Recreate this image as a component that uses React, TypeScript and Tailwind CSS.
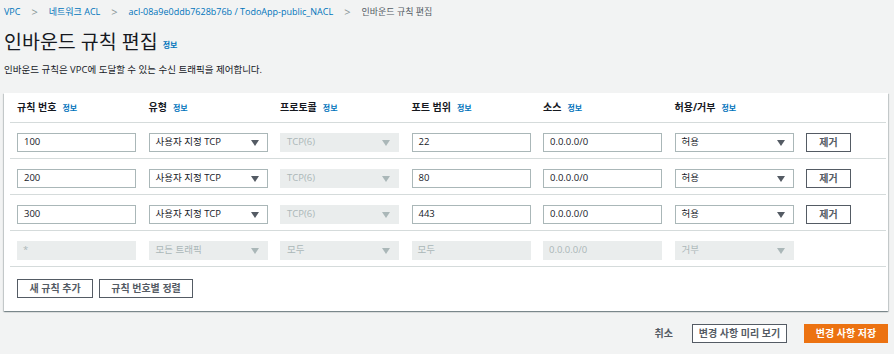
import React from "react";

const font = { fontFamily: '"Open Sans", "Noto Sans CJK KR", sans-serif' };

type Rule = {
  num: string;
  type: string;
  proto: string;
  port: string;
  source: string;
  action: string;
  locked?: boolean;
};

const rules: Rule[] = [
  { num: "100", type: "사용자 지정 TCP", proto: "TCP(6)", port: "22", source: "0.0.0.0/0", action: "허용" },
  { num: "200", type: "사용자 지정 TCP", proto: "TCP(6)", port: "80", source: "0.0.0.0/0", action: "허용" },
  { num: "300", type: "사용자 지정 TCP", proto: "TCP(6)", port: "443", source: "0.0.0.0/0", action: "허용" },
  { num: "*", type: "모든 트래픽", proto: "모두", port: "모두", source: "0.0.0.0/0", action: "거부", locked: true },
];

function Caret({ disabled }: { disabled?: boolean }) {
  return (
    <svg width="8" height="6" viewBox="0 0 8 6" className="shrink-0">
      <path d="M0 0h8L4 6z" fill={disabled ? "#aab7b8" : "#545b64"} />
    </svg>
  );
}

function Field({ value, disabled }: { value: string; disabled?: boolean }) {
  return (
    <div
      className={
        disabled
          ? "h-[19px] bg-[#eaeded] px-[6px] flex items-center text-[9.5px] text-[#aab7b8]"
          : "h-[19px] bg-white border border-[#aab7b8] px-[6px] flex items-center text-[9.5px] text-[#16191f]"
      }
    >
      {value}
    </div>
  );
}

function Select({ value, disabled }: { value: string; disabled?: boolean }) {
  return (
    <div
      className={
        disabled
          ? "h-[19px] bg-[#eaeded] pl-[7px] pr-[9px] flex items-center justify-between text-[9.5px] text-[#aab7b8]"
          : "h-[19px] bg-white border border-[#aab7b8] pl-[6px] pr-[8px] flex items-center justify-between text-[9.5px] text-[#16191f]"
      }
    >
      <span>{value}</span>
      <Caret disabled={disabled} />
    </div>
  );
}

function Label({ text }: { text: string }) {
  return (
    <div className="flex items-center gap-[6px] text-[10px] font-bold text-[#16191f]">
      <span>{text}</span>
      <span className="text-[8px] text-[#0073bb]">정보</span>
    </div>
  );
}

const grid = "grid grid-cols-[repeat(6,119px)_45px] gap-x-[12.5px] items-center";

export default function App() {
  return (
    <main className="min-h-screen bg-[#f2f3f3] px-[4px] pt-[5px]" style={font}>
      {/* Breadcrumb */}
      <nav className="flex items-center gap-[11px] text-[9px] h-[14px]">
        <span className="text-[#0073bb]">VPC</span>
        <span className="text-[#879596] text-[11px]">&gt;</span>
        <span className="text-[#0073bb]">네트워크 ACL</span>
        <span className="text-[#879596] text-[11px]">&gt;</span>
        <span className="text-[#0073bb]">acl-08a9e0ddb7628b76b / TodoApp-public_NACL</span>
        <span className="text-[#879596] text-[11px]">&gt;</span>
        <span className="text-[#545b64]">인바운드 규칙 편집</span>
      </nav>

      {/* Title */}
      <div className="flex items-end gap-[5px] mt-[11px] h-[24px]">
        <h1 className="text-[19.5px] leading-[24px] text-[#16191f]">인바운드 규칙 편집</h1>
        <span className="text-[8px] font-bold text-[#0073bb] mb-[3px]">정보</span>
      </div>
      <p className="text-[9.5px] text-[#16191f] mt-[9px] leading-[14px]">
        인바운드 규칙은 VPC에 도달할 수 있는 수신 트래픽을 제어합니다.
      </p>

      {/* Card */}
      <section className="mt-[16px] w-[884px] bg-white pl-[6px] pr-[2px] shadow-[0_1px_1px_0_rgba(0,28,36,0.3),1px_1px_1px_0_rgba(0,28,36,0.15),-1px_1px_1px_0_rgba(0,28,36,0.15)]">
        <div className={`${grid} h-[30px] pl-[7px] border-b border-[#d5dbdb]`}>
          <Label text="규칙 번호" />
          <Label text="유형" />
          <Label text="프로토콜" />
          <Label text="포트 범위" />
          <Label text="소스" />
          <Label text="허용/거부" />
          <div />
        </div>

        {rules.map((r) => (
          <div key={r.num} className={`${grid} pl-[7px] pt-[10px] pb-[6px] border-b border-[#d5dbdb]`}>
            <Field value={r.num} disabled={r.locked} />
            <Select value={r.type} disabled={r.locked} />
            <Select value={r.proto} disabled />
            <Field value={r.port} disabled={r.locked} />
            <Field value={r.source} disabled={r.locked} />
            <Select value={r.action} disabled={r.locked} />
            {r.locked ? (
              <div />
            ) : (
              <button className="h-[19px] border border-[#545b64] text-[10px] font-semibold text-[#545b64] bg-white">
                제거
              </button>
            )}
          </div>
        ))}

        <div className="flex gap-[6px] pl-[7px] pt-[12px] pb-[13px]">
          <button className="h-[19px] w-[76px] border border-[#545b64] text-[10px] font-semibold text-[#545b64] bg-white">
            새 규칙 추가
          </button>
          <button className="h-[19px] w-[94px] border border-[#545b64] text-[10px] font-semibold text-[#545b64] bg-white">
            규칙 번호별 정렬
          </button>
        </div>
      </section>

      {/* Footer actions */}
      <div className="flex items-center justify-end w-[884px] mt-[13px]">
        <button className="text-[10px] font-semibold text-[#545b64] mr-[19px]">취소</button>
        <button className="h-[19px] w-[95px] border border-[#545b64] text-[10px] font-semibold text-[#545b64] bg-white mr-[17px]">
          변경 사항 미리 보기
        </button>
        <button className="h-[19px] w-[84px] bg-[#ec7211] text-[10px] font-bold text-white">
          변경 사항 저장
        </button>
      </div>
    </main>
  );
}
